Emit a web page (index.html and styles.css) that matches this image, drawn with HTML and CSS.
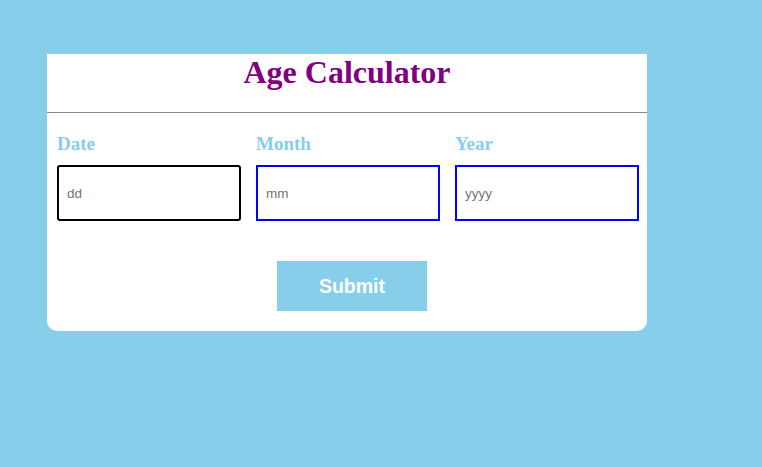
FILE: index.html
```html
<!DOCTYPE html>
<html>
<head>
<meta charset="utf-8">
<link rel="stylesheet" href="styles.css">
</head>
<body>
<div class="card">
  <h1 class="title">Age Calculator</h1>
  <hr class="rule">
  <div class="fields">
    <div class="field">
      <label class="label">Date</label>
      <input class="input focused" placeholder="dd" autofocus>
    </div>
    <div class="field">
      <label class="label">Month</label>
      <input class="input" placeholder="mm">
    </div>
    <div class="field">
      <label class="label">Year</label>
      <input class="input" placeholder="yyyy">
    </div>
  </div>
  <div class="actions">
    <button class="submit">Submit</button>
  </div>
</div>
</body>
</html>
```
FILE: styles.css
```css
html, body {
  margin: 0;
  padding: 0;
}
body {
  background: #87ceeb;
  width: 762px;
  height: 467px;
  font-family: "Liberation Serif", serif;
}
.card {
  margin: 54px 0 0 47px;
  width: 600px;
  height: 277px;
  background: #fff;
  border-radius: 0 0 10px 10px;
  box-sizing: border-box;
}
.title {
  margin: 0 0 21px;
  text-align: center;
  font-size: 32px;
  line-height: 37px;
  color: #800080;
  font-weight: bold;
}
.rule {
  margin: 0;
  border: 0;
  border-top: 1px solid #888;
  height: 0;
}
.fields {
  display: flex;
  gap: 15px;
  padding: 20px 0 0 10px;
}
.field {
  display: flex;
  flex-direction: column;
  width: 184px;
}
.label {
  font-size: 19px;
  line-height: 22px;
  font-weight: bold;
  color: #87ceeb;
  margin-bottom: 10px;
}
.input {
  box-sizing: border-box;
  width: 184px;
  height: 56px;
  border: 2px solid #0000ff;
  padding: 0 8px;
  font-family: "Liberation Sans", Arial, sans-serif;
  font-size: 13.5px;
  outline: none;
  border-radius: 0;
  margin: 0;
}
.input::placeholder {
  color: #757575;
}
.input.focused {
  border-color: #000;
  border-radius: 3px;
}
.actions {
  display: flex;
  justify-content: center;
  padding-top: 40px;
  padding-left: 10px;
  padding-right: 0;
}
.submit {
  width: 150px;
  height: 50px;
  border: 0;
  background: #87ceeb;
  color: #fff;
  font-family: "Liberation Sans", Arial, sans-serif;
  font-size: 19.5px;
  font-weight: bold;
  padding: 0;
}
```
